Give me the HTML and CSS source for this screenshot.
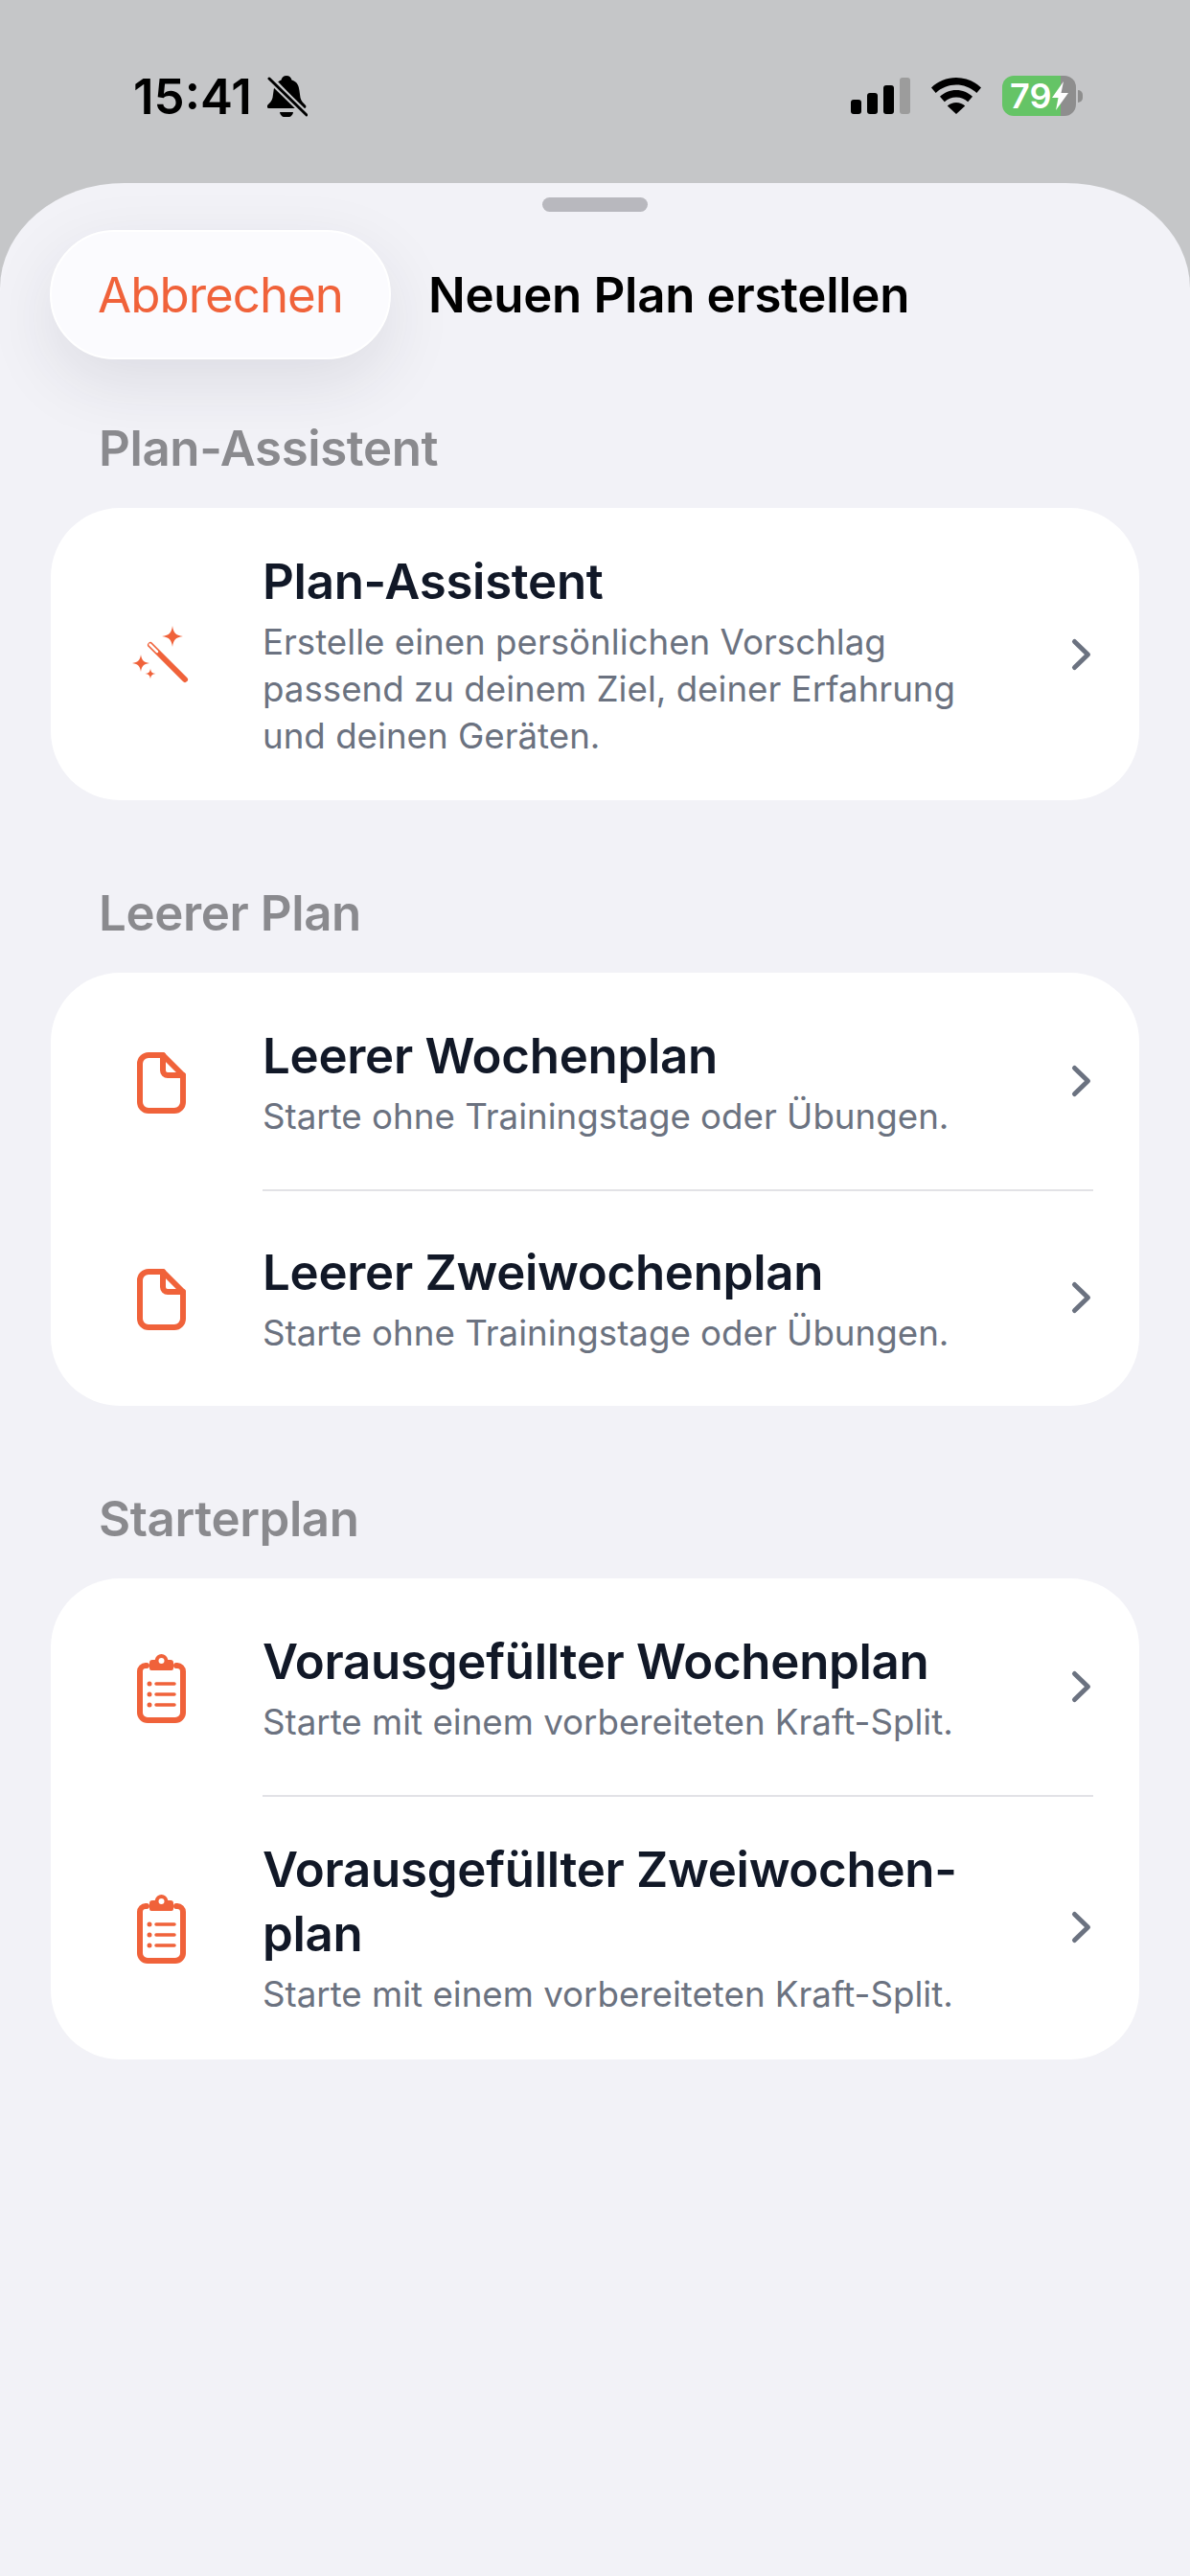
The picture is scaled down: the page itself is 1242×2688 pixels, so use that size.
FILE: index.html
```html
<!DOCTYPE html>
<html lang="de">
  <head>
    <meta charset="utf-8">
    <title>Neuen Plan erstellen</title>
    <link rel="stylesheet" href="styles.css">
  </head>
  <body>
    <div class="status">
      <div class="status-left">
        <span class="time">15:41</span>
        <svg class="bell" viewBox="0 0 42 43">
          <path d="M20 0c3 0 5 2 5.500 4.500C31 6 33 10.500 33.500 16l1 7c.5 3 3.500 6 5.500 8 1 1.500 0 3-1.500 3H1.500C0 34-1 32.500 0 31c2-2 5-5 5.500-8l1-7C7 10.500 10 6 14.500 4.500 15 2 17 0 20 0Z"/>
          <path d="M13 38h14a7 5.500 0 0 1-14 0Z"/>
          <path d="M6 3 42 41" fill="none" stroke="#c5c6c8" stroke-width="3"/>
          <path d="M2 3 41 41" fill="none" stroke="#c5c6c8" stroke-width="7"/>
          <path d="M2 3 41 41" fill="none" stroke="#000" stroke-width="3" stroke-linecap="round"/>
        </svg>
      </div>
      <div class="status-right">
        <div class="signal">
          <i class="bar1"></i><i class="bar2"></i><i class="bar3"></i><i class="bar4"></i>
        </div>
        <svg class="wifi" viewBox="0 0 52 38">
          <path d="M26 0c10 0 19 3.800 26 10.500l-4.700 5.500C41.500 10.500 34 7.500 26 7.500S10.500 10.500 4.700 16L0 10.500C7 3.800 16 0 26 0Z"/>
          <path d="M26 13c6.500 0 12.500 2.500 17 6.800l-4.800 5.400C35 22.200 30.700 20.500 26 20.500s-9 1.700-12.200 4.700L9 19.800C13.500 15.500 19.500 13 26 13Z"/>
          <path d="M26 26c3.500 0 6.800 1.300 9.200 3.500L26 38l-9.200-8.500C19.200 27.300 22.500 26 26 26Z"/>
        </svg>
        <div class="battery">
          <div class="battery-body">
            <span class="battery-level">79</span>
            <svg class="bolt" viewBox="0 0 17 30"><path d="M12 0 0 17h6.500L4 30 17 12h-7.500Z"/></svg>
          </div>
          <i class="battery-nub"></i>
        </div>
      </div>
    </div>

    <div class="sheet">
      <div class="grabber"></div>
      <div class="topbar">
        <button class="cancel">Abbrechen</button>
        <div class="topbar-title">Neuen Plan erstellen</div>
      </div>

      <div class="section section-first">
        <div class="section-label">Plan-Assistent</div>
        <div class="card">
          <div class="row row-tall">
            <svg class="icon" viewBox="0 0 120 120">
              <path class="solid" d="M71 30c1 7 3 10 11 11-8 1-10 4-11 11-1-7-3-10-11-11 8-1 10-4 11-11Z"/>
              <path class="solid" d="M38 60c.8 5.500 2.500 8 9 9-6.500 1-8.200 3.500-9 9-.8-5.500-2.500-8-9-9 6.500-1 8.200-3.500 9-9Z"/>
              <path class="solid" d="M48 74.500c.5 3.500 1.500 5 5.500 5.500-4 .5-5 2-5.500 5.500-.5-3.500-1.500-5-5.500-5.500 4-.5 5-2 5.500-5.500Z"/>
              <path class="line" stroke-width="6.500" d="M48 50 84 86"/>
              <path class="slit" d="M47.500 49.500 55 57"/>
            </svg>
            <div class="text">
              <div class="title">Plan-Assistent</div>
              <div class="sub">Erstelle einen persönlichen Vorschlag<br>passend zu deinem Ziel, deiner Erfahrung<br>und deinen Geräten.</div>
            </div>
            <svg class="chev" viewBox="0 0 24 36"><path d="M4.500 4.500 18.500 18 4.500 31.500"/></svg>
          </div>
        </div>
      </div>

      <div class="section">
        <div class="section-label">Leerer Plan</div>
        <div class="card">
          <div class="row">
            <svg class="icon" viewBox="0 0 120 120">
              <path class="line" d="M46 33H61L82 54V82a9 9 0 0 1-9 9H46a9 9 0 0 1-9-9V42a9 9 0 0 1 9-9Z"/>
              <path class="line" d="M61 33V49a5 5 0 0 0 5 5H82"/>
            </svg>
            <div class="text">
              <div class="title">Leerer Wochenplan</div>
              <div class="sub">Starte ohne Trainingstage oder Übungen.</div>
            </div>
            <svg class="chev" viewBox="0 0 24 36"><path d="M4.500 4.500 18.500 18 4.500 31.500"/></svg>
          </div>
          <div class="row row-next">
            <svg class="icon" viewBox="0 0 120 120">
              <path class="line" d="M46 33H61L82 54V82a9 9 0 0 1-9 9H46a9 9 0 0 1-9-9V42a9 9 0 0 1 9-9Z"/>
              <path class="line" d="M61 33V49a5 5 0 0 0 5 5H82"/>
            </svg>
            <div class="text">
              <div class="title">Leerer Zweiwochenplan</div>
              <div class="sub">Starte ohne Trainingstage oder Übungen.</div>
            </div>
            <svg class="chev" viewBox="0 0 24 36"><path d="M4.500 4.500 18.500 18 4.500 31.500"/></svg>
          </div>
        </div>
      </div>

      <div class="section">
        <div class="section-label">Starterplan</div>
        <div class="card">
          <div class="row">
            <svg class="icon" viewBox="0 0 120 120">
              <path class="line" d="M44 38h-1a6 6 0 0 0-6 6V87a8 8 0 0 0 8 8H74a8 8 0 0 0 8-8V44a6 6 0 0 0-6-6h-1"/>
              <path class="solid" fill-rule="evenodd" d="M59.500 26a7 7 0 0 1 6.800 6H69a3 3 0 0 1 3 3v6a2 2 0 0 1-2 2H49a2 2 0 0 1-2-2v-6a3 3 0 0 1 3-3h2.700a7 7 0 0 1 6.800-6Zm0 4a3 3 0 1 0 0 6 3 3 0 0 0 0-6Z"/>
              <circle class="solid" cx="47" cy="57" r="2.500"/><circle class="solid" cx="47" cy="68" r="2.500"/><circle class="solid" cx="47" cy="79" r="2.500"/>
              <path class="line list" d="M54 57H73M54 68H73M54 79H73"/>
            </svg>
            <div class="text">
              <div class="title">Vorausgefüllter Wochenplan</div>
              <div class="sub">Starte mit einem vorbereiteten Kraft-Split.</div>
            </div>
            <svg class="chev" viewBox="0 0 24 36"><path d="M4.500 4.500 18.500 18 4.500 31.500"/></svg>
          </div>
          <div class="row row-next">
            <svg class="icon" viewBox="0 0 120 120">
              <path class="line" d="M44 38h-1a6 6 0 0 0-6 6V87a8 8 0 0 0 8 8H74a8 8 0 0 0 8-8V44a6 6 0 0 0-6-6h-1"/>
              <path class="solid" fill-rule="evenodd" d="M59.500 26a7 7 0 0 1 6.800 6H69a3 3 0 0 1 3 3v6a2 2 0 0 1-2 2H49a2 2 0 0 1-2-2v-6a3 3 0 0 1 3-3h2.700a7 7 0 0 1 6.800-6Zm0 4a3 3 0 1 0 0 6 3 3 0 0 0 0-6Z"/>
              <circle class="solid" cx="47" cy="57" r="2.500"/><circle class="solid" cx="47" cy="68" r="2.500"/><circle class="solid" cx="47" cy="79" r="2.500"/>
              <path class="line list" d="M54 57H73M54 68H73M54 79H73"/>
            </svg>
            <div class="text">
              <div class="title">Vorausgefüllter Zweiwochen-<br>plan</div>
              <div class="sub">Starte mit einem vorbereiteten Kraft-Split.</div>
            </div>
            <svg class="chev" viewBox="0 0 24 36"><path d="M4.500 4.500 18.500 18 4.500 31.500"/></svg>
          </div>
        </div>
      </div>
    </div>
  </body>
</html>
```

FILE: styles.css
```css
* { box-sizing: border-box; }
html, body {
  margin: 0;
  height: 100%;
}
body {
  display: flex;
  flex-direction: column;
  background: #c5c6c8;
  font-family: Inter, "Noto Sans", sans-serif;
  color: #000;
}

/* status bar */
.status {
  height: 191px;
  flex: none;
  display: flex;
  justify-content: space-between;
  align-items: flex-start;
  padding: 79px 112px 0 139px;
}
.status-left {
  display: flex;
  align-items: center;
  gap: 16px;
  height: 43px;
}
.time {
  font-size: 51px;
  font-weight: 600;
  line-height: 42px;
}
.bell {
  width: 42px;
  height: 43px;
}
.status-right {
  display: flex;
  align-items: flex-start;
}
.signal {
  display: flex;
  align-items: flex-end;
  gap: 6px;
  height: 38px;
  margin-top: 2px;
}
.signal i {
  display: block;
  width: 11px;
  border-radius: 3px;
  background: #000;
}
.signal .bar1 { height: 15px; }
.signal .bar2 { height: 22px; }
.signal .bar3 { height: 30px; }
.signal .bar4 { height: 38px; background: #9c9c9c; }
.wifi {
  width: 52px;
  height: 38px;
  margin: 2px 22px 0 22px;
}
.battery {
  display: flex;
  align-items: center;
  height: 42px;
  gap: 2px;
}
.battery-body {
  width: 77px;
  height: 42px;
  border-radius: 12px;
  background: linear-gradient(to right, #65c466 79%, #8e8e8e 79%);
  display: flex;
  align-items: center;
  padding-left: 8px;
  gap: 1px;
}
.battery-level {
  color: #fff;
  font-size: 36px;
  font-weight: 600;
  line-height: 42px;
}
.bolt {
  width: 17px;
  height: 30px;
  fill: #fff;
}
.battery-nub {
  display: block;
  width: 5px;
  height: 13px;
  border-radius: 0 6px 6px 0;
  background: #8e8e8e;
}

/* sheet */
.sheet {
  flex: 1;
  background: #f2f2f7;
  border-radius: 130px 130px 0 0 / 110px 110px 0 0;
  padding: 15px 53px 0;
}
.grabber {
  width: 110px;
  height: 15px;
  border-radius: 8px;
  background: #b8b8be;
  margin: 0 auto;
}
.topbar {
  display: flex;
  align-items: center;
  gap: 39px;
  margin: 19px 0 0 -1px;
}
.cancel {
  width: 356px;
  height: 135px;
  border: 2px solid #fff;
  border-radius: 68px;
  background: #fbfbfe;
  box-shadow: 0 24px 70px rgba(40, 40, 60, .1);
  color: #f0623a;
  font-family: inherit;
  font-size: 51px;
  letter-spacing: -1px;
  padding: 0;
}
.topbar-title {
  font-size: 51px;
  font-weight: 600;
  letter-spacing: -.3px;
}

.section {
  margin-top: 88px;
}
.section-first {
  margin-top: 63px;
}
.section-label {
  color: #8a8a8e;
  font-size: 51px;
  font-weight: 600;
  letter-spacing: -.4px;
  line-height: 60px;
  padding-left: 50px;
  margin-bottom: 32px;
}
.card {
  background: #fff;
  border-radius: 72px;
}
.row {
  position: relative;
  display: flex;
  align-items: center;
  min-height: 226px;
  padding: 44px 48px 44px 56px;
}
.row-tall {
  min-height: 305px;
  padding-top: 40px;
  padding-bottom: 40px;
}
.row-next::before {
  content: "";
  position: absolute;
  top: 0;
  left: 221px;
  right: 48px;
  height: 2px;
  background: #e2e2e6;
}
.icon {
  flex: none;
  width: 120px;
  height: 120px;
  margin-right: 45px;
}
.line {
  fill: none;
  stroke: #f0623a;
  stroke-width: 6;
  stroke-linecap: round;
  stroke-linejoin: round;
}
.list {
  stroke-width: 3.500;
}
.solid {
  fill: #f0623a;
}
.slit {
  fill: none;
  stroke: #fff;
  stroke-width: 2.500;
  stroke-linecap: round;
}
.text {
  flex: 1;
}
.title {
  color: #111827;
  font-size: 51px;
  font-weight: 600;
  letter-spacing: -.3px;
  line-height: 67px;
}
.sub {
  color: #6b7280;
  font-size: 36.700px;
  line-height: 49px;
  margin-top: 5px;
}
.chev {
  flex: none;
  width: 24px;
  height: 36px;
  fill: none;
  stroke: #6b7280;
  stroke-width: 5;
  stroke-linecap: round;
  stroke-linejoin: round;
}
```
